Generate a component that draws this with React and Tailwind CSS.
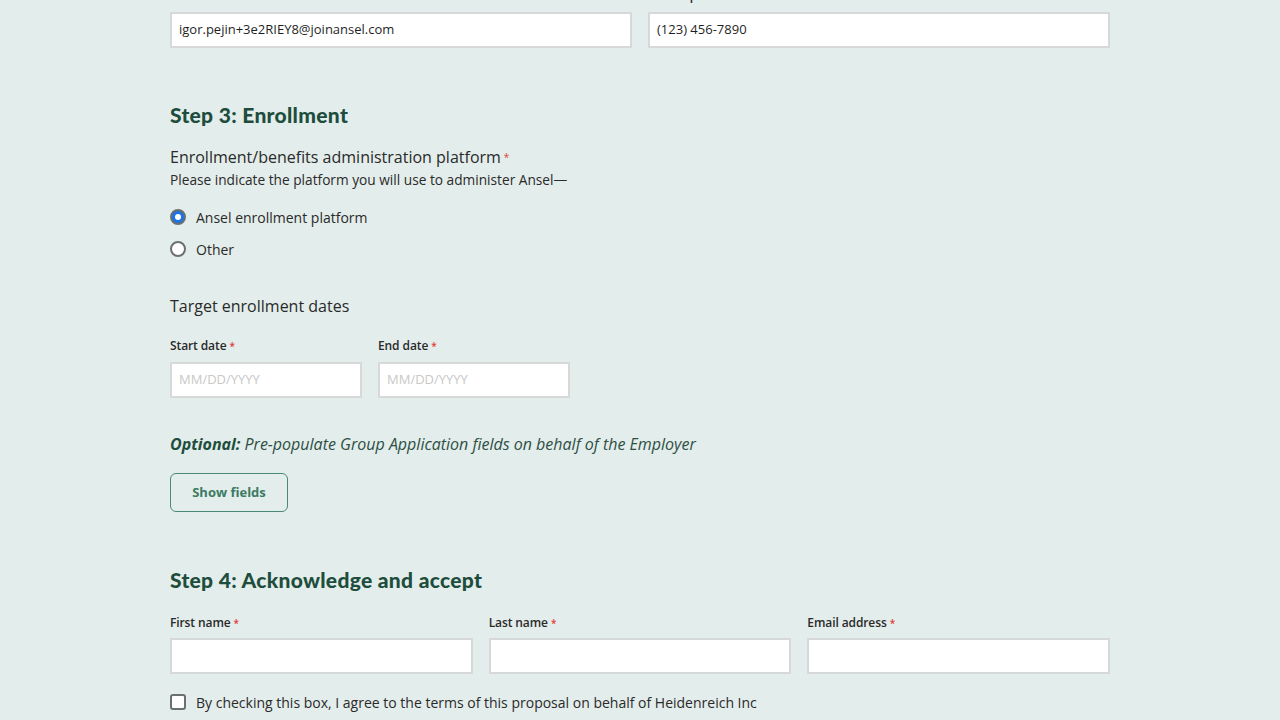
export default function App() {
  const body = { fontFamily: '"Open Sans", "Liberation Sans", sans-serif' };
  const head = { fontFamily: 'Lato, "Open Sans", sans-serif' };
  const Req = () => <span className="text-[#e53935] ml-[3px] text-[10px] align-top">*</span>;
  const Label = ({ children, req }) => (
    <div className="text-[12px] leading-[16px] font-semibold text-[#2a2a2a] tracking-[-0.1px]">
      {children}
      {req && <Req />}
    </div>
  );
  const Input = ({ value, placeholder, className = "" }) => (
    <div className={`h-[36px] bg-white border-2 border-[#d6d9d8] flex items-center px-[7px] text-[13px] text-[#1f1f1f] ${className}`}>
      {value ? <span>{value}</span> : <span className="text-[#c8c8c8]">{placeholder}</span>}
    </div>
  );
  return (
    <div className="min-h-[720px] w-full bg-[#e3edeb] overflow-hidden" style={body}>
      <div className="w-[940px] ml-[170px] -mt-[12px] pb-10">
        <div className="grid grid-cols-2 gap-x-[16px]">
          <div className="flex flex-col gap-[8px]">
            <Label req>Broker email address</Label>
            <Input value="igor.pejin+3e2RIEY8@joinansel.com" />
          </div>
          <div className="flex flex-col gap-[8px]">
            <Label>Broker phone number</Label>
            <Input value="(123) 456-7890" />
          </div>
        </div>

        <h2 className="mt-[55px] text-[21px] leading-[24px] font-black text-[#1e4d3d] tracking-[0.3px]" style={head}>
          Step 3: Enrollment
        </h2>

        <div className="mt-[20px] text-[16px] leading-[20px] text-[#2a2a2a]">
          Enrollment/benefits administration platform
          <Req />
        </div>
        <div className="mt-[3px] text-[13.7px] leading-[20px] text-[#2a2a2a]">
          Please indicate the platform you will use to administer Ansel—
        </div>

        <div className="mt-[17px] flex flex-col gap-[12px]">
          <div className="flex items-center h-[20px] gap-[10px]">
            <span className="w-[16px] h-[16px] rounded-full bg-[#1a73e8] border-2 border-[#6b6f70] flex items-center justify-center">
              <span className="w-[6px] h-[6px] rounded-full bg-white" />
            </span>
            <span className="text-[14px] text-[#2a2a2a]">Ansel enrollment platform</span>
          </div>
          <div className="flex items-center h-[20px] gap-[10px]">
            <span className="w-[16px] h-[16px] rounded-full bg-white border-2 border-[#6b6f70]" />
            <span className="text-[14px] text-[#2a2a2a]">Other</span>
          </div>
        </div>

        <div className="mt-[37px] text-[16px] leading-[20px] text-[#2a2a2a]">Target enrollment dates</div>

        <div className="mt-[22px] flex gap-[16px]">
          <div className="w-[192px] flex flex-col gap-[8px]">
            <Label req>Start date</Label>
            <Input placeholder="MM/DD/YYYY" />
          </div>
          <div className="w-[192px] flex flex-col gap-[8px]">
            <Label req>End date</Label>
            <Input placeholder="MM/DD/YYYY" />
          </div>
        </div>

        <div className="mt-[36px] text-[16px] leading-[20px] italic text-[#2d4f44]">
          <span className="font-bold text-[#1e4d3d]">Optional:</span> Pre-populate Group Application fields on behalf of the Employer
        </div>

        <button className="mt-[19px] w-[118px] h-[39px] rounded-[6px] border border-[#4a8a73] text-[#3b7a63] text-[13px] font-bold bg-transparent">
          Show fields
        </button>

        <h2 className="mt-[56px] text-[21px] leading-[24px] font-black text-[#1e4d3d] tracking-[0.3px]" style={head}>
          Step 4: Acknowledge and accept
        </h2>

        <div className="mt-[23px] grid grid-cols-3 gap-x-[16px]">
          <div className="flex flex-col gap-[7px]">
            <Label req>First name</Label>
            <Input />
          </div>
          <div className="flex flex-col gap-[7px]">
            <Label req>Last name</Label>
            <Input />
          </div>
          <div className="flex flex-col gap-[7px]">
            <Label req>Email address</Label>
            <Input />
          </div>
        </div>

        <div className="mt-[18px] flex items-center gap-[10px] h-[20px]">
          <span className="w-[16px] h-[16px] rounded-[3px] bg-white border-2 border-[#6b6f70]" />
          <span className="text-[14px] text-[#2a2a2a]">
            By checking this box, I agree to the terms of this proposal on behalf of Heidenreich Inc
          </span>
        </div>
      </div>
    </div>
  );
}
